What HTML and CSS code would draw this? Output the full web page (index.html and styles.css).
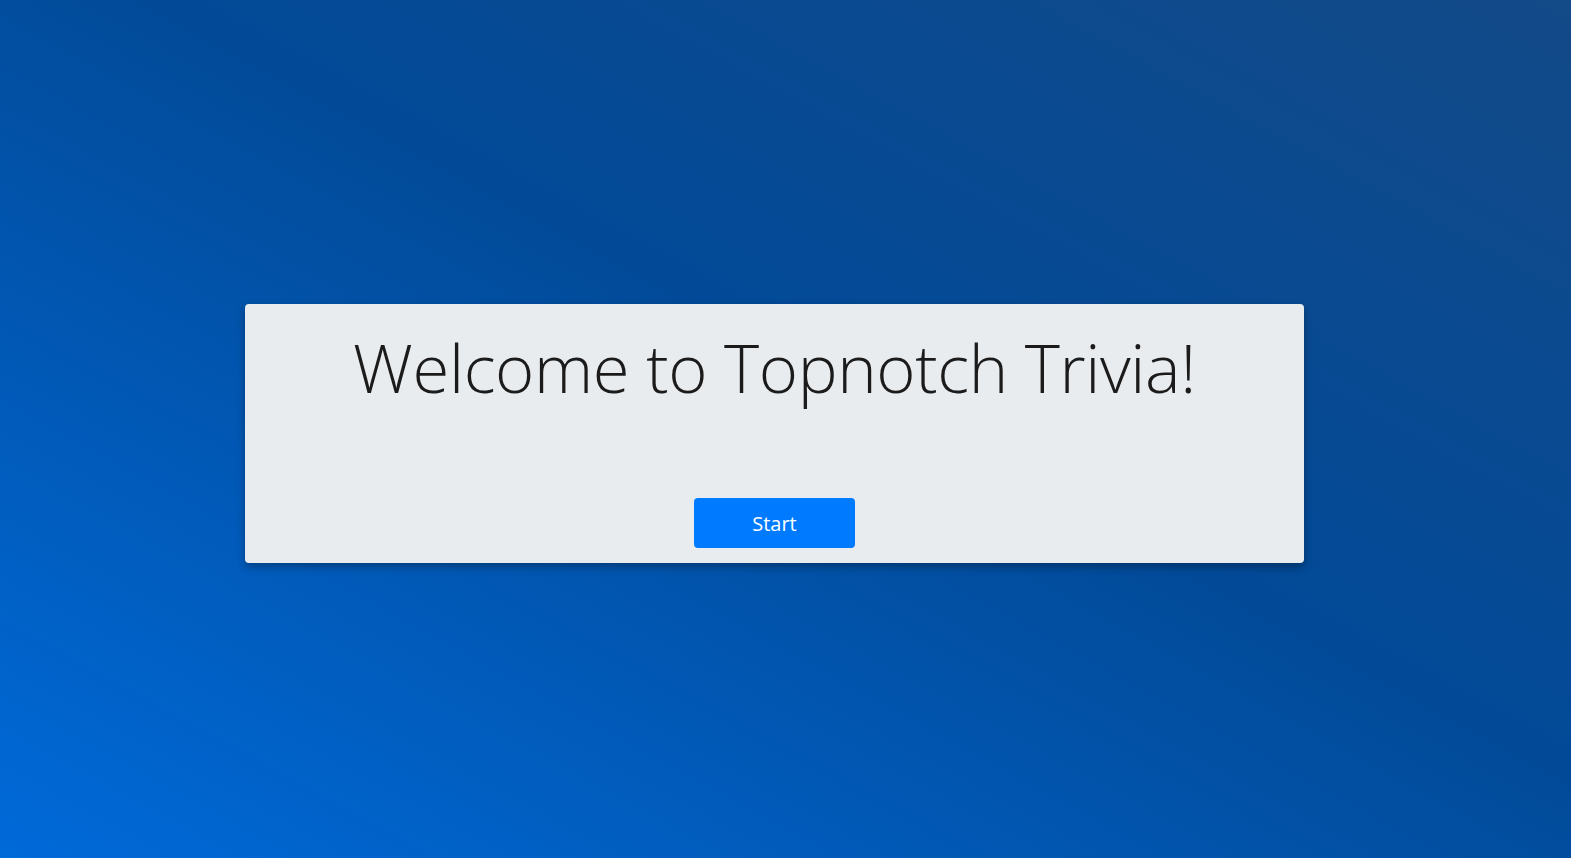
FILE: index.html
```html
<!DOCTYPE html>
<html lang="en">
<head>
<meta charset="utf-8">
<title>Topnotch Trivia</title>
<link rel="stylesheet" href="styles.css">
</head>
<body>
<main class="page">
  <section class="card">
    <h1 class="title">Welcome to Topnotch Trivia!</h1>
    <button class="start-btn" type="button">Start</button>
  </section>
</main>
</body>
</html>
```

FILE: styles.css
```css
html, body {
  margin: 0;
  height: 100%;
}
body {
  background: linear-gradient(to top right, #006ad9 0%, #024a98 55%, #134a88 100%);
  font-family: "Open Sans", "Noto Sans", sans-serif;
  overflow: hidden;
}
.page {
  box-sizing: border-box;
  height: 100%;
  padding: 304px 267px 0 245px;
}
.card {
  box-sizing: border-box;
  width: 1059px;
  height: 259px;
  background: #e9ecef;
  border-radius: 4px;
  box-shadow: 0 4px 8px rgba(0, 0, 0, 0.3);
  display: flex;
  flex-direction: column;
  align-items: center;
  padding: 18px 0 15px;
}
.title {
  margin: 0;
  font-family: "Open Sans", sans-serif;
  font-weight: 300;
  font-size: 67px;
  line-height: 90px;
  color: #1b1b1b;
  letter-spacing: -0.4px;
}
.start-btn {
  margin-top: auto;
  width: 161px;
  height: 50px;
  border: none;
  border-radius: 4px;
  background: #007bff;
  color: #ffffff;
  font-family: "Open Sans", sans-serif;
  font-size: 20px;
  font-weight: 400;
  cursor: pointer;
}
```
